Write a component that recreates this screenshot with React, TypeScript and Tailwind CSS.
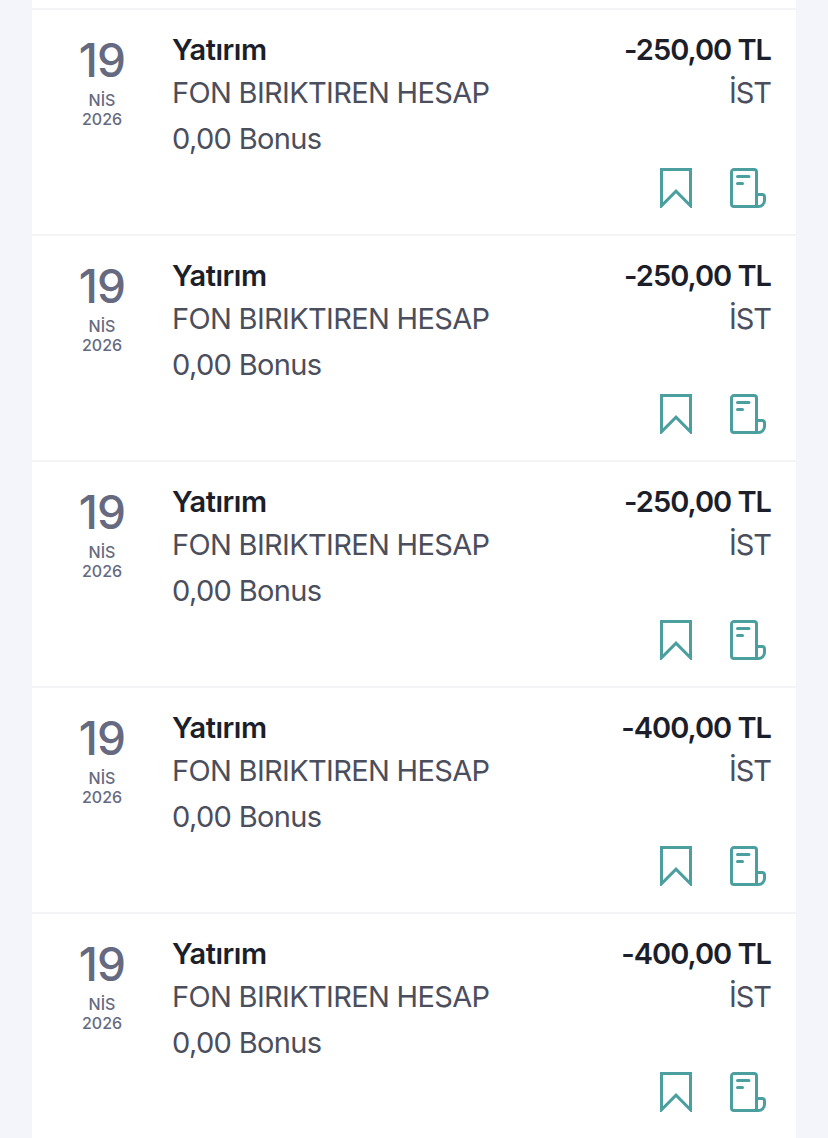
import React from 'react';

interface Transaction {
  id: number;
  day: string;
  month: string;
  year: string;
  title: string;
  description: string;
  bonus: string;
  amount: string;
  branch: string;
}

const base = {
  day: '19',
  month: 'NİS',
  year: '2026',
  title: 'Yatırım',
  description: 'FON BIRIKTIREN HESAP',
  bonus: '0,00 Bonus',
  branch: 'İST',
};

const transactions: Transaction[] = [
  { id: 1, ...base, amount: '-250,00 TL' },
  { id: 2, ...base, amount: '-250,00 TL' },
  { id: 3, ...base, amount: '-250,00 TL' },
  { id: 4, ...base, amount: '-400,00 TL' },
  { id: 5, ...base, amount: '-400,00 TL' },
];

const BookmarkIcon: React.FC = () => (
  <svg width="32" height="40" viewBox="0 0 32 40" fill="none" stroke="currentColor" strokeWidth="3">
    <path d="M1.5 1.5h29v36.3L16 23.2 1.5 37.8z" />
  </svg>
);

const ReceiptIcon: React.FC = () => (
  <svg width="36" height="40" viewBox="0 0 36 40" fill="none" stroke="currentColor" strokeWidth="3">
    <path d="M26.5 38.5H4A2.5 2.5 0 0 1 1.5 36V4A2.5 2.5 0 0 1 4 1.5h20A2.5 2.5 0 0 1 26.5 4z" />
    <path d="M26.5 26.5H32a2.5 2.5 0 0 1 2.5 2.5v3.5a6 6 0 0 1-6 6h-2" />
    <path d="M7.5 8.5h11.5M7.5 15.5h5" strokeLinecap="round" />
  </svg>
);

const TransactionRow: React.FC<{ item: Transaction }> = ({ item }) => (
  <li className="flex h-[226px] border-t-2 border-[#f4f4f7]">
    {/* Date */}
    <div className="w-[140px] pt-[26px] text-center font-medium text-[#666a80]">
      <p className="text-[46px] leading-[48px] tracking-[-0.8px]">{item.day}</p>
      <p className="mt-[7px] text-[16px] leading-[19px]">{item.month}</p>
      <p className="text-[16px] leading-[19px]">{item.year}</p>
    </div>

    {/* Details */}
    <div className="flex flex-1 flex-col pt-[19px] pr-[25px] text-[29px] text-[#4b4e5c]">
      <div className="flex justify-between leading-[42px] font-semibold text-[#1c1e2a]">
        <p className="tracking-[-0.5px]">{item.title}</p>
        <p className="tracking-[-1px]">{item.amount}</p>
      </div>
      <div className="flex justify-between leading-[44px] font-normal">
        <p className="tracking-[-0.67px]">{item.description}</p>
        <p className="tracking-[-1px]">{item.branch}</p>
      </div>
      <p className="leading-[48px] font-normal tracking-[-0.65px]">{item.bonus}</p>

      {/* Actions */}
      <div className="mt-[5px] mr-[5px] flex justify-end gap-[38px] text-[#4b9f9f]">
        <button type="button" aria-label="Kaydet">
          <BookmarkIcon />
        </button>
        <button type="button" aria-label="Dekont">
          <ReceiptIcon />
        </button>
      </div>
    </div>
  </li>
);

const App: React.FC = () => {
  return (
    <div className="h-screen overflow-hidden bg-[#f3f5fb] px-8 font-['Inter','Liberation_Sans',sans-serif]">
      <ul className="h-full bg-white pt-2">
        {transactions.map((item) => (
          <TransactionRow key={item.id} item={item} />
        ))}
      </ul>
    </div>
  );
};

export default App;
